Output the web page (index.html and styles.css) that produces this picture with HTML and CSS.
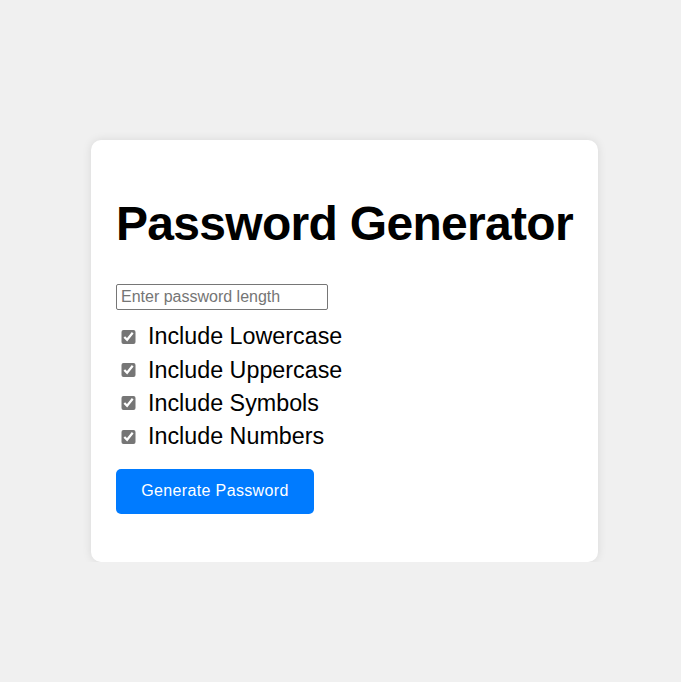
FILE: index.html
```html
<!DOCTYPE html>
<html>
<head>
<meta charset="utf-8">
<title>Password Generator</title>
<link rel="stylesheet" href="styles.css">
</head>
<body>
<div class="page">
  <div class="card">
    <h1 class="title">Password Generator</h1>
    <input class="length" type="number" placeholder="Enter password length">
    <label class="opt"><input type="checkbox" checked><span>Include Lowercase</span></label>
    <label class="opt"><input type="checkbox" checked><span>Include Uppercase</span></label>
    <label class="opt"><input type="checkbox" checked><span>Include Symbols</span></label>
    <label class="opt"><input type="checkbox" checked><span>Include Numbers</span></label>
    <button class="btn">Generate Password</button>
  </div>
</div>
</body>
</html>
```
FILE: styles.css
```css
html, body {
  margin: 0;
  padding: 0;
  background: #f0f0f0;
  font-family: "Liberation Sans", Arial, sans-serif;
}
.page {
  padding: 140px 0 0 91px;
}
.card {
  width: 457px;
  height: 372px;
  background: #fff;
  border-radius: 10px;
  padding: 25px;
  box-shadow: 0 0 10px rgba(0,0,0,0.1);
  display: flex;
  flex-direction: column;
  align-items: flex-start;
}
.card > * { flex-shrink: 0; }
.title {
  font-size: 48px;
  font-weight: bold;
  margin: 31px 0 33px;
  line-height: 55px;
  color: #000;
  white-space: nowrap;
  letter-spacing: -0.7px;
}
.length {
  box-sizing: border-box;
  width: 212px;
  height: 26px;
  font-family: "Liberation Sans", Arial, sans-serif;
  font-size: 16px;
  border: 1px solid #767676;
  border-radius: 2px;
  padding: 1px 4px;
  margin: 0 0 10px;
}
.length::placeholder { color: #757575; }
.opt {
  display: flex;
  align-items: center;
  font-size: 23.3px;
  height: 33.4px;
  color: #000;
}
.opt input {
  margin: 0 12px 0 5px;
  width: 15px;
  height: 14px;
  accent-color: #767676;
}
.btn {
  margin-top: 15px;
  width: 198px;
  height: 45px;
  background: #007bff;
  color: #fff;
  border: none;
  border-radius: 5px;
  font-family: "Liberation Sans", Arial, sans-serif;
  font-size: 16px;
  letter-spacing: 0.35px;
  padding: 0;
}
```
